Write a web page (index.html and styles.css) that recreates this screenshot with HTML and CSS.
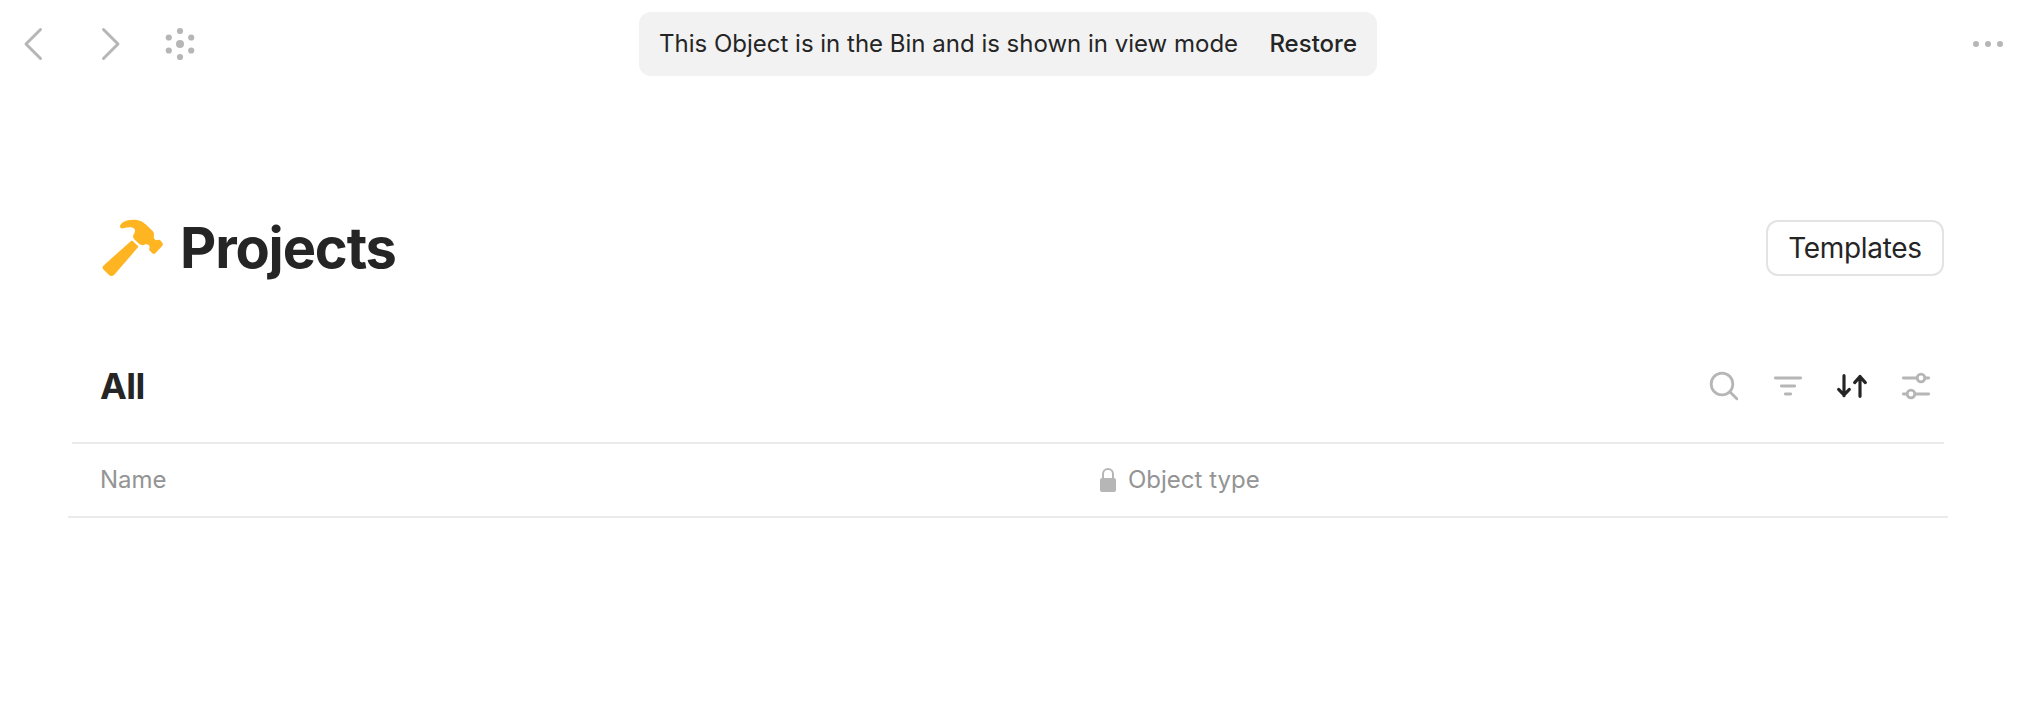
FILE: index.html
```html
<!DOCTYPE html>
<html lang="en">
<head>
<meta charset="utf-8">
<title>Projects</title>
<link rel="stylesheet" href="styles.css">
</head>
<body>
<header class="topbar">
  <nav class="nav">
    <svg class="icon" viewBox="0 0 40 40"><path class="chevron" d="M23.500 5.500 9 20l14.500 14.500"/></svg>
    <svg class="icon" viewBox="0 0 40 40"><path class="chevron" d="M10.500 5.500 25 20 10.500 34.500"/></svg>
    <svg class="icon" viewBox="0 0 40 40"><g class="dots"><circle cx="20" cy="20" r="4"/><circle cx="20" cy="7" r="3.100"/><circle cx="20" cy="33" r="3.100"/><circle cx="8.800" cy="13.500" r="3.100"/><circle cx="31.200" cy="13.500" r="3.100"/><circle cx="8.800" cy="26.500" r="3.100"/><circle cx="31.200" cy="26.500" r="3.100"/></g></svg>
  </nav>
  <div class="banner">
    <span class="banner-text">This Object is in the Bin and is shown in view mode</span>
    <span class="restore">Restore</span>
  </div>
  <svg class="icon more" viewBox="0 0 40 40"><g class="dots"><circle cx="8" cy="20" r="3"/><circle cx="20" cy="20" r="3"/><circle cx="32" cy="20" r="3"/></g></svg>
</header>
<main class="page">
  <div class="heading">
    <svg class="hammer" viewBox="60 48 192 192"><path d="M154 122Q156 121 158 123L174 138Q175 140 174 142L103 224Q95 231 87 225L69 207Q66 202 70 197Z"/><path d="M120 80C121 68 137 59 158 59C178 59 187 64 196 72L218 93Q224 99 222 106C220 113 222 118 228 120C232 122 236 117 240 120L248 130Q250 134 247 137L226 160Q221 164 217 160L208 151C206 146 211 142 208 138C205 133 199 131 193 134C187 137 182 135 177 131L162 117Q157 111 160 105C165 97 167 90 163 86C154 79 142 82 130 85Q121 87 120 80Z"/></svg>
    <h1 class="title">Projects</h1>
    <button class="templates">Templates</button>
  </div>
  <div class="controls">
    <h2 class="view">All</h2>
    <div class="tools">
      <svg class="icon" viewBox="42 48 120 120"><g class="stroke"><circle cx="96" cy="102" r="32.500"/><path d="M120 126 140.500 146.500"/></g></svg>
      <svg class="icon" viewBox="234 48 120 120"><path class="stroke" d="M256 84H332M274 108H314M286 132H302"/></svg>
      <svg class="icon" viewBox="426 48 120 120"><path class="stroke active" d="M462 77V137M446 118 462 135 478 118M510 139V79M494 98 510 80 526 98"/></svg>
      <svg class="icon" viewBox="618 48 120 120"><g class="stroke"><path d="M640 84H680M706 84H716M640 132H650M676 132H716"/><circle cx="693" cy="84" r="11.500"/><circle cx="663" cy="132" r="11.500"/></g></svg>
    </div>
  </div>
  <div class="table-head">
    <div class="cell-name">Name</div>
    <div class="cell-type">
      <svg class="lock" viewBox="0 0 16 24"><path class="shackle" d="M3 12V6a5 5 0 0 1 10 0v6"/><rect y="10" width="16" height="14" rx="2"/></svg>
      <span>Object type</span>
    </div>
  </div>
</main>
</body>
</html>
```

FILE: styles.css
```css
* { box-sizing: border-box; }

body {
  margin: 0;
  background: #fff;
  color: #252525;
  font-family: Inter, "Liberation Sans", sans-serif;
}

svg { display: block; flex: none; }

.icon { width: 40px; height: 40px; }

.topbar {
  display: grid;
  grid-template-columns: 639px 738px 1fr;
  align-items: center;
  height: 88px;
}

.nav { display: flex; padding-left: 17px; }
.nav .icon:nth-child(2) { margin-left: 36px; }
.nav .icon:nth-child(3) { margin-left: 27px; }

.chevron {
  fill: none;
  stroke: #b6b6b6;
  stroke-width: 3;
  stroke-linecap: round;
  stroke-linejoin: round;
}

.dots { fill: #b6b6b6; }

.banner {
  display: flex;
  align-items: center;
  justify-content: space-between;
  height: 64px;
  padding: 0 20px;
  border-radius: 12px;
  background: #f2f2f2;
  font-size: 24px;
  line-height: 40px;
  white-space: nowrap;
}

.restore { font-weight: 500; }

.more { justify-self: end; margin-right: 32px; }

.page { padding: 128px 96px 0 72px; }

.heading {
  display: flex;
  align-items: center;
  height: 64px;
  padding-left: 28px;
}

.hammer { width: 64px; height: 64px; fill: #ffb522; }

.title {
  margin: 0 0 0 16px;
  font-size: 56px;
  font-weight: 700;
  line-height: 64px;
  letter-spacing: -1.15px;
}

.templates {
  width: 178px;
  height: 56px;
  margin-left: auto;
  padding: 0;
  border: 2px solid #e3e3e3;
  border-radius: 12px;
  background: #fff;
  color: inherit;
  font: 400 28px/44px Inter, "Liberation Sans", sans-serif;
  letter-spacing: -0.3px;
}

.controls {
  display: flex;
  align-items: center;
  justify-content: space-between;
  height: 164px;
  padding: 50px 8px 0 28px;
  border-bottom: 2px solid #ebebeb;
}

.view { margin: 0; font-size: 36px; line-height: 44px; letter-spacing: -0.6px; }

.tools { display: flex; gap: 24px; }

.stroke {
  fill: none;
  stroke: #b6b6b6;
  stroke-width: 8.5;
  stroke-linecap: round;
  stroke-linejoin: round;
}

.active { stroke: #252525; stroke-width: 9.5; }

.table-head {
  display: grid;
  grid-template-columns: 1000px 1fr;
  align-items: center;
  height: 74px;
  margin: 0 -4px;
  padding-left: 32px;
  border-bottom: 2px solid #ebebeb;
  color: #949494;
  font-size: 24px;
  line-height: 36px;
}

.cell-type { display: flex; align-items: center; gap: 12px; }

.lock { width: 16px; height: 24px; fill: #b6b6b6; }

.shackle { fill: none; stroke: #b6b6b6; stroke-width: 2; }
```
